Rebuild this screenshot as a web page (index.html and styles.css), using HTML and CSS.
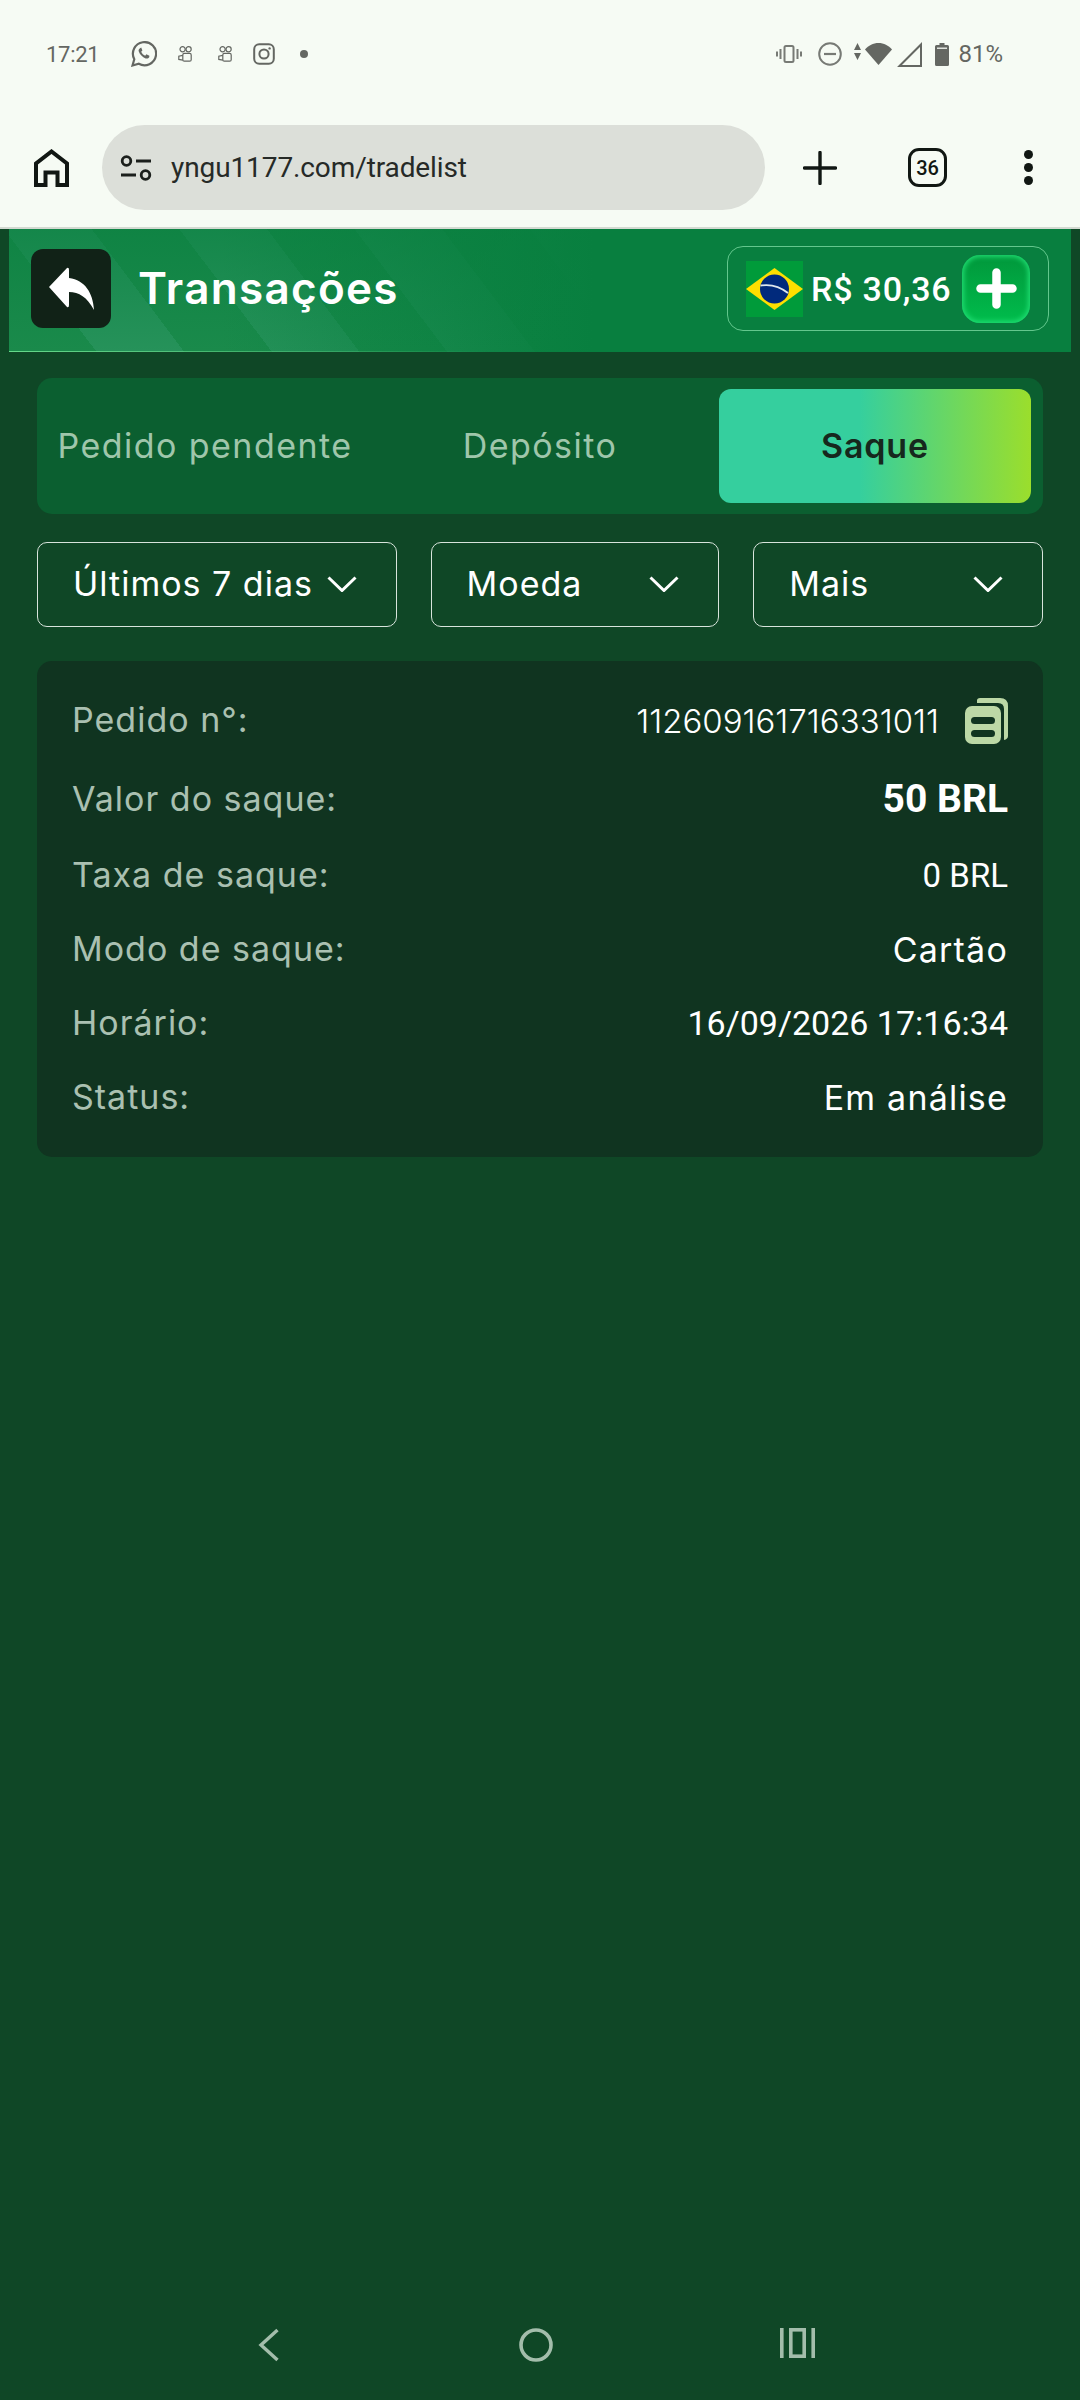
FILE: index.html
```html
<!DOCTYPE html>
<html lang="pt-BR">
<head>
  <meta charset="UTF-8" />
  <title>Transações</title>
  <link rel="stylesheet" href="styles.css">
</head>
<body>

  <!-- Android status bar -->
  <div class="status-bar">
    <div class="status-left">
      <span class="status-time">17:21</span>
      <svg class="icon-wa" viewBox="0 0 26 26"><path d="M1.500 24.500l1.800-6.300A11.600 11.600 0 1 1 7.800 22.800z" fill="none" stroke="#646762" stroke-width="2.200"/><path d="M9 7.200c-1.200.7-1.700 2-1.200 3.400 1 3 3.600 5.600 6.800 6.800 1.500.5 2.900 0 3.600-1.200l.2-1.500-3-1.400-1.200 1.400c-1.800-.8-3.200-2.200-4-4l1.200-1.200-1.200-2.900z" fill="#646762"/></svg>
      <svg class="icon-kw" viewBox="0 0 14 16"><g fill="none" stroke="#646762" stroke-width="1.200"><circle cx="4.600" cy="3.200" r="2.600"/><circle cx="10.600" cy="3.200" r="2.600"/><rect x="4.800" y="7.400" width="8.400" height="7.800" rx="1.500"/><path d="M4.800 9.400L.8 10.200v3.200l4 .8"/></g></svg>
      <svg class="icon-kw kw-second" viewBox="0 0 14 16"><g fill="none" stroke="#646762" stroke-width="1.200"><circle cx="4.600" cy="3.200" r="2.600"/><circle cx="10.600" cy="3.200" r="2.600"/><rect x="4.800" y="7.400" width="8.400" height="7.800" rx="1.500"/><path d="M4.800 9.400L.8 10.200v3.200l4 .8"/></g></svg>
      <svg class="icon-ig" viewBox="0 0 22 22"><rect x="1.200" y="1.200" width="19.600" height="19.600" rx="5" fill="none" stroke="#646762" stroke-width="2"/><circle cx="11" cy="11" r="4.600" fill="none" stroke="#646762" stroke-width="2"/><circle cx="16.600" cy="5.400" r="1.200" fill="#646762"/></svg>
      <span class="status-dot"></span>
    </div>
    <div class="status-right">
      <svg class="icon-vib" viewBox="0 0 26 18"><rect x="8.500" y="1" width="9" height="16" rx="1.500" fill="none" stroke="#777a75" stroke-width="2"/><path d="M4.500 4v10M1 6.500v5M21.500 4v10M25 6.500v5" stroke="#777a75" stroke-width="2"/></svg>
      <svg class="icon-dnd" viewBox="0 0 24 24"><circle cx="12" cy="12" r="10.800" fill="none" stroke="#777a75" stroke-width="2"/><path d="M6 12h12" stroke="#777a75" stroke-width="2.200"/></svg>
      <svg class="icon-arrows" viewBox="0 0 7 17"><path d="M3.500 0L7 7H0zM0 10h7l-3.500 7z" fill="#646762"/></svg>
      <svg class="icon-wifi" viewBox="0 0 27 22"><path d="M0 6.500C3.500 2.500 8.200 0 13.500 0S23.500 2.500 27 6.500L13.500 22z" fill="#646762"/></svg>
      <svg class="icon-signal" viewBox="0 0 25 25"><path d="M2.500 24L24 2.500V24z" fill="none" stroke="#646762" stroke-width="2"/></svg>
      <svg class="icon-batt" viewBox="0 0 14 23"><path d="M4.500 0h5v2h3a1.500 1.500 0 0 1 1.500 1.500V21.500a1.500 1.500 0 0 1-1.500 1.500H1.500A1.500 1.500 0 0 1 0 21.500V3.500A1.500 1.500 0 0 1 1.500 2h3z" fill="#646762"/><rect x="2" y="4.500" width="10" height="1.500" fill="#dfe3dd"/></svg>
      <span class="status-pct">81%</span>
    </div>
  </div>

  <!-- Browser toolbar -->
  <div class="toolbar">
    <svg class="icon-home" viewBox="0 0 35 38"><path d="M2 36V14.500L17.500 2.500 33 14.500V36H23.500V23.500H11.500V36z" fill="none" stroke="#111713" stroke-width="4"/></svg>
    <div class="address">
      <svg class="icon-tune" viewBox="0 0 32 26"><circle cx="6.500" cy="6" r="4.300" fill="none" stroke="#1b1f1c" stroke-width="2.800"/><path d="M16 6h15M1 20h15" stroke="#1b1f1c" stroke-width="2.800"/><circle cx="25.500" cy="20" r="4.300" fill="none" stroke="#1b1f1c" stroke-width="2.800"/></svg>
      <span class="url">yngu1177.com/tradelist</span>
    </div>
    <svg class="icon-new" viewBox="0 0 34 34"><path d="M17 1.500v31M1.500 17h31" stroke="#111713" stroke-width="3.400" stroke-linecap="round"/></svg>
    <span class="tab-count">36</span>
    <div class="kebab"><span></span><span></span><span></span></div>
  </div>

  <!-- Page header -->
  <header class="page-header">
    <div class="back-btn">
      <svg viewBox="0 0 45 43"><path d="M0 20L18 1Q20 0 20 3V11C36 13 44 26 45 43 38 30 30 25 20 25V38Q20 41 18 40z" fill="#fff"/></svg>
    </div>
    <h1 class="page-title">Transações</h1>
    <div class="balance">
      <svg class="flag" viewBox="0 0 57 56">
        <rect width="57" height="56" fill="#009b3a"/>
        <path d="M28.500 7L57 28 28.500 49 0 28z" fill="#fedf00"/>
        <circle cx="28.500" cy="28" r="14.500" fill="#012a7c"/>
        <path d="M14.500 24.500C24 23 34 25.500 42 32" fill="none" stroke="#dfe8ee" stroke-width="1.800"/>
      </svg>
      <span class="balance-value">R$ 30,36</span>
      <div class="add-btn">
        <svg viewBox="0 0 41 41"><path d="M20.500 4.500v32M4.500 20.500h32" stroke="#fff" stroke-width="8.500" stroke-linecap="round"/></svg>
      </div>
    </div>
  </header>

  <main class="content">
    <div class="tabs">
      <div class="tab">Pedido pendente</div>
      <div class="tab">Depósito</div>
      <div class="tab tab-active">Saque</div>
    </div>

    <div class="filters">
      <div class="filter filter-date"><span>Últimos 7 dias</span><svg viewBox="0 0 30 16"><path d="M1.500 1.500L15 14.500 28.500 1.500" fill="none" stroke="#fff" stroke-width="3"/></svg></div>
      <div class="filter filter-coin"><span>Moeda</span><svg viewBox="0 0 30 16"><path d="M1.500 1.500L15 14.500 28.500 1.500" fill="none" stroke="#fff" stroke-width="3"/></svg></div>
      <div class="filter filter-more"><span>Mais</span><svg viewBox="0 0 30 16"><path d="M1.500 1.500L15 14.500 28.500 1.500" fill="none" stroke="#fff" stroke-width="3"/></svg></div>
    </div>

    <div class="order-card">
      <div class="row row-order">
        <span class="label">Pedido n°:</span>
        <span class="value value-id">112609161716331011
          <svg class="icon-copy" viewBox="0 0 43 46"><path d="M12 2.500Q12 0 15 0H35Q43 0 43 8V38Q43 41 39 42V11Q39 5 33 5H12z" fill="#bcd8a6"/><rect x="0" y="8" width="36" height="38" rx="7" fill="#bcd8a6"/><rect x="6" y="19" width="24" height="7" rx="3.500" fill="#103420"/><rect x="6" y="32" width="24" height="7" rx="3.500" fill="#103420"/></svg>
        </span>
      </div>
      <div class="row row-amount">
        <span class="label">Valor do saque:</span>
        <span class="value value-num value-bold">50 BRL</span>
      </div>
      <div class="row">
        <span class="label">Taxa de saque:</span>
        <span class="value value-num">0 BRL</span>
      </div>
      <div class="row">
        <span class="label">Modo de saque:</span>
        <span class="value">Cartão</span>
      </div>
      <div class="row">
        <span class="label">Horário:</span>
        <span class="value value-num value-date">16/09/2026 17:16:34</span>
      </div>
      <div class="row">
        <span class="label">Status:</span>
        <span class="value">Em análise</span>
      </div>
    </div>
  </main>

  <!-- Android navigation -->
  <nav class="nav-bar">
    <svg class="nav-back" viewBox="0 0 21 34"><path d="M19.500 2L3 17l16.500 15" fill="none" stroke="#a3bdab" stroke-width="3.400"/></svg>
    <svg class="nav-home" viewBox="0 0 34 34"><circle cx="17" cy="17" r="15" fill="none" stroke="#a3bdab" stroke-width="3.600"/></svg>
    <svg class="nav-recent" viewBox="0 0 35 30"><path d="M1.800 0v30M33.200 0v30" stroke="#a3bdab" stroke-width="3.600"/><rect x="10.800" y="1.800" width="13.400" height="26.400" fill="none" stroke="#a3bdab" stroke-width="3.600"/></svg>
  </nav>

</body>
</html>
```

FILE: styles.css
```css
* {
  box-sizing: border-box;
}
body {
  margin: 0;
  min-height: 2400px;
  display: flex;
  flex-direction: column;
  background-color: #0f4726;
  font-family: Inter, "Noto Sans", sans-serif;
  color: #fff;
}
svg {
  display: block;
  flex: none;
}

/* status bar */
.status-bar {
  height: 108px;
  padding: 0 77px 0 46px;
  display: flex;
  align-items: center;
  justify-content: space-between;
  background-color: #f6fbf4;
  color: #646762;
  font-size: 22px;
}
.status-left, .status-right {
  display: flex;
  align-items: center;
}
.status-left {
  gap: 21px;
}
.status-time {
  width: 64px;
  font-family: Roboto, sans-serif;
  letter-spacing: -0.3px;
}
.icon-wa {
  width: 26px;
  height: 26px;
}
.icon-kw {
  width: 14px;
  height: 16px;
}
.kw-second {
  margin-left: 5px;
}
.icon-ig {
  width: 22px;
  height: 22px;
}
.status-dot {
  width: 8px;
  height: 8px;
  margin-left: 4px;
  border-radius: 50%;
  background-color: #646762;
}
.icon-vib {
  width: 26px;
  height: 18px;
}
.icon-dnd {
  width: 24px;
  height: 24px;
  margin-left: 16px;
}
.icon-arrows {
  width: 7px;
  height: 17px;
  margin-left: 12px;
  margin-top: -5px;
}
.icon-wifi {
  width: 27px;
  height: 22px;
  margin-left: 4px;
}
.icon-signal {
  width: 25px;
  height: 25px;
  margin-left: 5px;
}
.icon-batt {
  width: 14px;
  height: 23px;
  margin-left: 13px;
}
.status-pct {
  margin-left: 9px;
  font-family: Roboto, sans-serif;
  font-size: 24px;
}

/* browser toolbar */
.toolbar {
  height: 121px;
  padding: 0 0 0 34px;
  display: flex;
  align-items: center;
  background-color: #f6fbf4;
  border-bottom: 2px solid #d3d9d1;
}
.icon-home {
  width: 35px;
  height: 38px;
}
.address {
  width: 663px;
  height: 85px;
  margin-left: 33px;
  padding-left: 18px;
  display: flex;
  align-items: center;
  gap: 19px;
  background-color: #dcdfd9;
  border-radius: 43px;
}
.icon-tune {
  width: 32px;
  height: 26px;
}
.url {
  font-family: Roboto, sans-serif;
  font-size: 28px;
  letter-spacing: -0.1px;
  color: #262a27;
}
.icon-new {
  width: 34px;
  height: 34px;
  margin-left: 38px;
}
.tab-count {
  width: 39px;
  height: 39px;
  margin-left: 71px;
  display: flex;
  align-items: center;
  justify-content: center;
  border: 3.5px solid #111713;
  border-radius: 11px;
  font-family: Roboto, sans-serif;
  font-size: 20px;
  font-weight: 500;
  color: #111713;
}
.kebab {
  margin-left: 77px;
  display: flex;
  flex-direction: column;
  gap: 4px;
}
.kebab span {
  width: 9px;
  height: 9px;
  border-radius: 50%;
  background-color: #111713;
}

/* page header */
.page-header {
  height: 123px;
  margin: 0 9px;
  padding: 0 22px 4px;
  display: flex;
  align-items: center;
  background-color: #087f3f;
  background-image:
    linear-gradient(90deg, #66d98b, rgba(102, 217, 139, 0) 45%),
    linear-gradient(rgba(8, 127, 63, 0.6), rgba(8, 127, 63, 0)),
    linear-gradient(90deg, rgba(8, 127, 63, 0) 20%, #087f3f 55%),
    repeating-linear-gradient(53deg, #1a8a4b 0, #1a8a4b 70px, #26925a 70px, #26925a 140px);
  background-size: 100% 1px, 100% 100%, 100% 100%, 100% 100%;
  background-position: bottom, 0 0, 0 0, 0 0;
  background-repeat: no-repeat;
}
.back-btn {
  width: 80px;
  height: 79px;
  display: flex;
  align-items: center;
  justify-content: center;
  background-color: #112217;
  border-radius: 12px;
}
.back-btn svg {
  width: 45px;
  height: 43px;
}
.page-title {
  margin: 0 0 2px 27px;
  font-size: 44px;
  font-weight: 600;
  letter-spacing: 1.3px;
}
.balance {
  width: 322px;
  height: 85px;
  margin-left: auto;
  padding: 0 18px;
  display: flex;
  align-items: center;
  border: 1.5px solid #63c78d;
  border-radius: 16px;
}
.flag {
  width: 57px;
  height: 56px;
}
.balance-value {
  margin-left: 8px;
  font-family: Roboto, sans-serif;
  font-size: 34px;
  font-weight: 500;
  letter-spacing: 0.8px;
  white-space: nowrap;
}
.add-btn {
  width: 68px;
  height: 68px;
  margin-left: auto;
  display: flex;
  align-items: center;
  justify-content: center;
  background: linear-gradient(#01973b, #00bd4c);
  box-shadow: inset 0 0 5px 2px #1fdc72;
  border-radius: 18px;
}
.add-btn svg {
  width: 41px;
  height: 41px;
}

/* main content */
.content {
  flex: 1;
  padding: 26px 37px 0;
}
.tabs {
  height: 136px;
  padding: 11px 12px;
  display: grid;
  grid-template-columns: repeat(3, 1fr);
  gap: 23px;
  background-color: #0b5f30;
  border-radius: 15px;
}
.tab {
  padding-bottom: 2px;
  display: flex;
  align-items: center;
  justify-content: center;
  font-size: 34px;
  letter-spacing: 1.45px;
  color: #9fc6ab;
  white-space: nowrap;
}
.tab-active {
  background: linear-gradient(90deg, #35cf9e 45%, #9bde2c 100%);
  border-radius: 12px;
  font-weight: 600;
  letter-spacing: 0.8px;
  color: #16281d;
}

.filters {
  margin-top: 28px;
  display: flex;
  gap: 34px;
}
.filter {
  height: 85px;
  padding: 0 39px 2px 35px;
  display: flex;
  align-items: center;
  justify-content: space-between;
  border: 1.5px solid #d8e4dc;
  border-radius: 10px;
  font-size: 34px;
  letter-spacing: 1px;
}
.filter svg {
  width: 30px;
  height: 16px;
}
.filter-date {
  width: 360px;
}
.filter-coin {
  width: 289px;
}
.filter-more {
  width: 290px;
}

.order-card {
  margin-top: 34px;
  padding: 37px 35px 40px;
  display: flex;
  flex-direction: column;
  gap: 34px;
  background-color: #103420;
  border-radius: 15px;
}
.row {
  height: 40px;
  display: flex;
  align-items: center;
  justify-content: space-between;
  font-size: 34px;
}
.row-order {
  height: 45px;
}
.row-amount {
  height: 44px;
}
.label {
  padding-bottom: 2px;
  letter-spacing: 1px;
  color: #aac0b1;
}
.value {
  letter-spacing: 1.2px;
}
.value-id {
  display: flex;
  align-items: center;
  gap: 26px;
  font-size: 33px;
  font-weight: 300;
  letter-spacing: 0;
}
.icon-copy {
  width: 43px;
  height: 46px;
}
.value-num {
  font-family: Roboto, sans-serif;
  font-size: 33px;
  letter-spacing: 0;
}
.value-bold {
  font-size: 39px;
  font-weight: 700;
}
.value-date {
  font-size: 34px;
}

/* android nav */
.nav-bar {
  height: 110px;
  padding-left: 258px;
  display: flex;
  align-items: center;
}
.nav-back {
  width: 21px;
  height: 34px;
}
.nav-home {
  width: 34px;
  height: 34px;
  margin-left: 240px;
}
.nav-recent {
  width: 35px;
  height: 30px;
  margin-left: 227px;
  margin-top: -4px;
}
```
